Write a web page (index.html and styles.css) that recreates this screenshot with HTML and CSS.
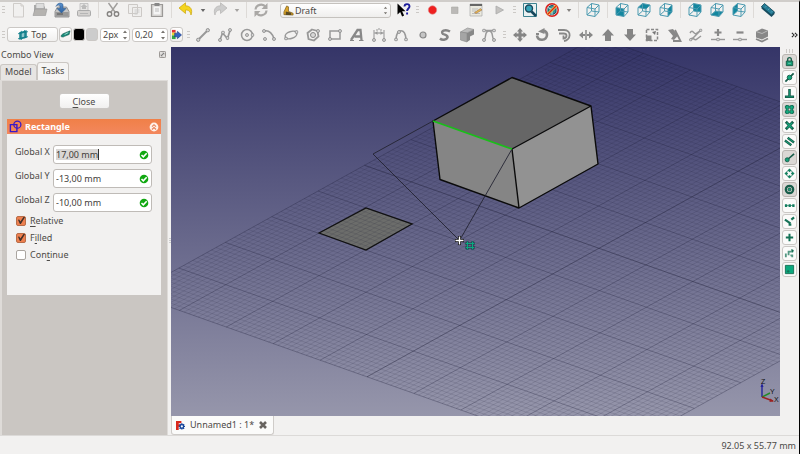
FILE: index.html
```html
<!DOCTYPE html>
<html lang="en">
<head>
<meta charset="utf-8">
<title>Unnamed1</title>
<link rel="stylesheet" href="styles.css">
</head>
<body>
<svg class="defs" aria-hidden="true">
  <defs>
    <linearGradient id="arrowFill" x1="0" y1="0" x2="0" y2="1"><stop offset="0" stop-color="#5c93cf"/><stop offset="1" stop-color="#2a5f9f"/></linearGradient>
    <symbol id="cube" viewBox="0 0 16 16"><path d="M2 5.500 6.500 1.500 14 3v7L10 14.500 2 13zM2 5.500 10 7l4-4M10 7v7.500M6.500 1.500V9L2 13M6.500 9l7.500 1" fill="none" stroke="#4d9bb1" stroke-width="1" stroke-linejoin="round"/></symbol>
    <symbol id="node" viewBox="0 0 4 4"><circle cx="2" cy="2" r="1.500" fill="#d4d4d4" stroke="#888" stroke-width=".8"/></symbol>
    <symbol id="down" viewBox="0 0 8 6"><path d="M1 1h6L4 5z"/></symbol>
    <symbol id="spin" viewBox="0 0 6 12"><path d="M1 4 3 1.500 5 4zM1 8l2 2.500L5 8z" fill="#77736e"/></symbol>
    <symbol id="ok" viewBox="0 0 10 10"><circle cx="5" cy="5" r="4.300" fill="#12a812"/><path d="m2.500 5 1.800 1.800 3.400-3.600" fill="none" stroke="#fff" stroke-width="1.600"/></symbol>
  </defs>
</svg>

<header class="toolbars">
  <div class="bar" role="toolbar" aria-label="File and view">
    <span class="grip"></span>
    <button class="tool" aria-label="New"><svg viewBox="0 0 16 16"><path d="M3.500 1.500H11l2.500 2.500v11h-10z" fill="#f1f0ef" stroke="#cfccc9"/><path d="M11 1.500V4h2.500" fill="none" stroke="#cfccc9"/></svg></button>
    <button class="tool" aria-label="Open"><svg viewBox="0 0 16 16"><path d="M2 3h4l1 1.500h6V13H2z" fill="#aaa"/><path d="M4 1.500h8v5H4z" fill="#ddd" stroke="#aaa" stroke-width=".6"/><path d="M1 13.500 3 7h12l-1.500 6.500z" fill="#b5b3b0" stroke="#999" stroke-width=".6"/></svg></button>
    <button class="tool" aria-label="Save"><svg viewBox="0 0 16 16"><path d="M1 9.500 3.500 5h9L15 9.500V15H1z" fill="#c5c5c5" stroke="#808080" stroke-width=".8"/><path d="M1.500 10h13v4.500h-13z" fill="#999"/><path d="M3 12h6" stroke="#555"/><path d="M2 4.500C3 1 7 0 9 2.500v4h3l-4.500 4.500L3 6.500h3V4C5 2.500 3 3 2 4.500z" fill="url(#arrowFill)" stroke="#345f91" stroke-width=".6"/></svg></button>
    <button class="tool" aria-label="Print"><svg viewBox="0 0 16 16"><path d="M4 1.500h8V9H4z" fill="#e6e5e4" stroke="#bbb" stroke-width=".8"/><path d="M6 7V5H4.500L8 2l3.500 3H10v2z" fill="#bbb"/><rect x="1.500" y="8.500" width="13" height="5.500" rx="1" fill="#d4d2d0" stroke="#aaa"/><path d="M4 11.500h8" stroke="#b5b5b5"/></svg></button>
    <span class="sep"></span>
    <button class="tool" aria-label="Cut"><svg viewBox="0 0 16 16"><path d="M3.500 1 10 10M12.500 1 6 10" stroke="#a09e9c" stroke-width="1.400"/><circle cx="4.500" cy="12" r="2.200" fill="none" stroke="#858381" stroke-width="1.400"/><circle cx="11.500" cy="12" r="2.200" fill="none" stroke="#858381" stroke-width="1.400"/></svg></button>
    <button class="tool" aria-label="Copy"><svg viewBox="0 0 16 16"><path d="M1.500 2.500h9v9h-9zM5.500 5.500h9v9h-9z" fill="#efeeed" stroke="#ccc9c6"/><path d="M7.500 8h5M7.500 10h5M7.500 12h3" stroke="#ccc"/></svg></button>
    <button class="tool" aria-label="Paste"><svg viewBox="0 0 16 16"><path d="M2.500 2.500h11v12h-11z" fill="#d5d3d1" stroke="#9b9997" stroke-width="1.200"/><path d="M4.500 4.500h7v8h-7z" fill="#f5f5f5"/><path d="M5.500 1h5v3h-5z" fill="#888"/><path d="M6 7h4M6 9h4" stroke="#bbb"/></svg></button>
    <span class="sep"></span>
    <button class="tool" aria-label="Undo"><svg viewBox="0 0 16 16"><path d="M1 6 7.500.8v3c5 0 7.500 4 5.500 9.200-.8-4-2.500-5-5.500-5v3.500z" fill="#f4d51e" stroke="#caa40a" stroke-width=".7"/></svg></button>
    <button class="drop" aria-label="Undo history"><svg fill="#666"><use href="#down"/></svg></button>
    <button class="tool" aria-label="Redo"><svg viewBox="0 0 16 16"><path d="M15 6 8.500.8v3c-5 0-7.500 4-5.500 9.200.8-4 2.500-5 5.500-5v3.500z" fill="#ccc" stroke="#b5b3b1" stroke-width=".7"/></svg></button>
    <button class="drop" aria-label="Redo history"><svg fill="#a5a3a1"><use href="#down"/></svg></button>
    <span class="sep"></span>
    <button class="tool" aria-label="Refresh"><svg viewBox="0 0 16 16"><path d="M2.500 7.500c.5-5 7.500-6.500 10-2.500M13.500 8.500c-.5 5-7.500 6.500-10 2.500" fill="none" stroke="#aaa8a6" stroke-width="2.200"/><path d="M14.500 1v6h-6zM1.500 15V9h6z" fill="#aaa8a6"/></svg></button>
    <span class="combo">
      <svg class="combo-icon" viewBox="0 0 12 12"><path d="M1 10.500V7.500L4 1l2 1v5l5 2v2z" fill="#dda52a" stroke="#6f5312" stroke-width=".7"/><path d="m3 7 6 1.500V11H3z" fill="#5b4b22"/></svg>
      <select aria-label="Workbench"><option>Draft</option></select>
      <svg class="combo-spin"><use href="#spin"/></svg>
    </span>
    <button class="tool" aria-label="What's this?"><svg viewBox="0 0 16 16"><path d="M2.500 1.500v11l2.700-2.500 1.900 4.500 2-.9-2-4.300h3.400z" fill="#000"/><path d="M9.500 4.500c0-3.200 5-3.200 5 0 0 2-2.400 2-2.400 4.500M12.100 10.500v2" fill="none" stroke="#1d1d9b" stroke-width="1.900"/></svg></button>
    <span class="grip"></span>
    <button class="tool" aria-label="Record macro"><svg viewBox="0 0 16 16"><circle cx="8.500" cy="8" r="4.200" fill="#ee2020" stroke="#d88" stroke-width=".6"/></svg></button>
    <button class="tool" aria-label="Stop macro"><svg viewBox="0 0 16 16"><path d="M5.500 5H12v6.500H5.500z" fill="#bbb9b7" stroke="#a9a7a5" stroke-width=".6"/></svg></button>
    <button class="tool" aria-label="Macros"><svg viewBox="0 0 16 16"><path d="M2 2h12v12H2z" fill="#eae9df" stroke="#aaa" stroke-width=".7"/><path d="M2 2h12v2H2z" fill="#666"/><path d="M4 7h6M4 9h4M4 11.500h8" stroke="#bbb"/><path d="m6.500 10.500 6-4 1.500 1.500-6 3.500z" fill="#e8b64c" stroke="#865" stroke-width=".5"/></svg></button>
    <button class="tool" aria-label="Run macro"><svg viewBox="0 0 16 16"><path d="m6 4 7.500 4L6 12z" fill="#c4c2c0" stroke="#aaa" stroke-width=".8"/></svg></button>
    <span class="grip broad"></span>
    <button class="tool" aria-label="Fit all"><svg viewBox="0 0 16 16"><path d="M1.500 1.500h13v13h-13z" fill="#e9f1f2" stroke="#3c8290"/><circle cx="7" cy="6.500" r="3.500" fill="#36a5ba" stroke="#17475c" stroke-width="1.400"/><path d="m9.500 9.500 4.500 4.500" stroke="#17475c" stroke-width="2.600"/></svg></button>
    <button class="tool" aria-label="Draw style"><svg viewBox="0 0 16 16"><path d="M4 5.500 8 3l4 2.500v5L8 13l-4-2.500z" fill="#39909c" stroke="#174d59"/><path d="m4 5.500 4 2 4-2M8 7.500V13" fill="none" stroke="#bde1e5"/><circle cx="8" cy="8" r="6.200" fill="none" stroke="#d9201d" stroke-width="1.500"/><path d="m3.500 12.500 9-9" stroke="#f8dc40" stroke-width="2.600"/><path d="m3.500 12.500 9-9" stroke="#d9201d" stroke-width="1.400"/></svg></button>
    <button class="drop" aria-label="Draw style options"><svg fill="#85827f"><use href="#down"/></svg></button>
    <span class="sep"></span>
    <button class="tool" aria-label="Axonometric"><svg><use href="#cube"/></svg></button>
    <span class="sep"></span>
    <button class="tool" aria-label="Front"><svg viewBox="0 0 16 16"><path d="m2 5.500 8 1.500v7.500L2 13z" fill="#13879f"/><use href="#cube" width="16" height="16"/></svg></button>
    <button class="tool" aria-label="Top view"><svg viewBox="0 0 16 16"><path d="M2 5.500 6.500 1.500 14 3l-4 4z" fill="#13879f"/><use href="#cube" width="16" height="16"/></svg></button>
    <button class="tool" aria-label="Right"><svg viewBox="0 0 16 16"><path d="m10 7 4-4v7l-4 4.500z" fill="#13879f"/><use href="#cube" width="16" height="16"/></svg></button>
    <span class="sep"></span>
    <button class="tool" aria-label="Rear"><svg viewBox="0 0 16 16"><path d="M6.500 1.500 14 3v7L6.500 9z" fill="#13879f"/><use href="#cube" width="16" height="16"/></svg></button>
    <button class="tool" aria-label="Bottom"><svg viewBox="0 0 16 16"><path d="M6.500 9 14 10l-4 4.500L2 13z" fill="#13879f"/><use href="#cube" width="16" height="16"/></svg></button>
    <button class="tool" aria-label="Left"><svg viewBox="0 0 16 16"><path d="M2 5.500 6.500 1.500V9L2 13z" fill="#13879f"/><use href="#cube" width="16" height="16"/></svg></button>
    <span class="sep"></span>
    <button class="tool" aria-label="Measure"><svg viewBox="0 0 16 16"><path d="m1.500 4.500 3-3 10 8.500v2l-3 3-10-8.500z" fill="#194e62"/><path d="m1.500 4.500 3-3 10 8.500-3 3z" fill="#247c96" stroke="#163c4a" stroke-width=".6"/><path d="m5 5.500 1.500-1.500M8 8l1.500-1.500M11 10.500l1.500-1.500" stroke="#6fb3c4" stroke-width=".7"/></svg></button>
  </div>

  <div class="bar" role="toolbar" aria-label="Draft tools">
    <span class="grip"></span>
    <button class="plane"><svg viewBox="0 0 12 12"><path d="m2.500 3.500 7-2v7l-7 2z" fill="#8fc7cd" stroke="#14808c" stroke-width="2"/><path d="M0 4.500 12 2M0 10.500 12 8M4 1v11M8 0v10" stroke="#14808c"/></svg>Top</button>
    <button class="mini" aria-label="Construction mode"><svg viewBox="0 0 12 12"><path d="M1 8c1-3 3-3 5-4l5-2-1 4-5 2c-1 1-3 1-4 0z" fill="#178978" stroke="#0d5549" stroke-width=".6"/><path d="m5 6 4-2" stroke="#a5ddd2"/></svg></button>
    <button class="swatch black" aria-label="Line color"></button>
    <button class="swatch gray" aria-label="Face color"></button>
    <span class="spinbox"><input class="width-field" aria-label="Line width" value="2px"><svg><use href="#spin"/></svg></span>
    <span class="spinbox"><input class="size-field" aria-label="Text size" value="0,20"><svg><use href="#spin"/></svg></span>
    <button class="mini apply" aria-label="Apply style"><svg viewBox="0 0 12 12"><path d="M1 1h4v3H1z" fill="#e03535"/><path d="M1 4h4v3H1z" fill="#eed232"/><path d="M1 7h4v4H1z" fill="#35a445"/><path d="M4 4.500h3V2.500l4.500 4-4.500 4V8.500H4z" fill="#3262c1" stroke="#173377" stroke-width=".6"/></svg></button>
    <span class="grip"></span>
    <button class="tool" aria-label="Line"><svg viewBox="0 0 16 16"><path d="M3.500 12.500 12.500 3.500" stroke="#999" stroke-width="2"/><use href="#node" x="1" y="10.500" width="4.500" height="4.500"/><use href="#node" x="10.500" y="1" width="4.500" height="4.500"/></svg></button>
    <button class="tool" aria-label="Wire"><svg viewBox="0 0 16 16"><path d="m3 13 2.500-7 5 5.500L13 3.500" fill="none" stroke="#999" stroke-width="1.700"/><use href="#node" x="1" y="11" width="4" height="4"/><use href="#node" x="4" y="3.500" width="4" height="4"/><use href="#node" x="8.500" y="9" width="4" height="4"/><use href="#node" x="11" y="1" width="4" height="4"/></svg></button>
    <button class="tool" aria-label="Circle"><svg viewBox="0 0 16 16"><circle cx="8" cy="8" r="5.500" fill="none" stroke="#999" stroke-width="1.500"/><use href="#node" x="6" y="6" width="4" height="4"/><use href="#node" x="11.500" y="6" width="4" height="4"/></svg></button>
    <button class="tool" aria-label="Arc"><svg viewBox="0 0 16 16"><path d="M3 4c5-1.500 9 3 10 8" fill="none" stroke="#999" stroke-width="1.600"/><use href="#node" x="1" y="2" width="4" height="4"/><use href="#node" x="11" y="10" width="4" height="4"/><use href="#node" x="2" y="10" width="4" height="4"/></svg></button>
    <button class="tool" aria-label="Ellipse"><svg viewBox="0 0 16 16"><ellipse cx="8" cy="8" rx="6" ry="3.500" transform="rotate(-18 8 8)" fill="none" stroke="#999" stroke-width="1.500"/><use href="#node" x="1" y="9.500" width="4" height="4"/><use href="#node" x="11.500" y="3" width="4" height="4"/></svg></button>
    <button class="tool" aria-label="Polygon"><svg viewBox="0 0 16 16"><path d="m7 2.500 5.500 1.500 1 5.500L9 13.500 3.500 12 2.500 6z" fill="none" stroke="#999" stroke-width="1.800"/><circle cx="8" cy="8" r="2.500" fill="#d8d8d8" stroke="#888"/><use href="#node" x="11" y="2" width="4" height="4"/></svg></button>
    <button class="tool" aria-label="Rectangle"><svg viewBox="0 0 16 16"><path d="M3 4h10v8H3z" fill="none" stroke="#999" stroke-width="1.500"/><use href="#node" x="1" y="10" width="4" height="4"/><use href="#node" x="11" y="2" width="4" height="4"/></svg></button>
    <button class="tool" aria-label="Text"><svg viewBox="0 0 16 16"><path d="M2 13 8.500 3h3l1 10M5.500 9.500H12" fill="none" stroke="#888" stroke-width="2.300"/><path d="M1 13.500h4M10 13.500h4.500" stroke="#888" stroke-width="1.200"/></svg></button>
    <button class="tool" aria-label="Dimension"><svg viewBox="0 0 16 16"><path d="M3 3v10M13 3v10M3 6h10" stroke="#aaa" stroke-width="1.300"/><path d="m4 6 2.500-2v4zM12 6 9.500 4v4z" fill="#999"/><path d="M6 2v2M8 1v2M10 2v2" stroke="#999"/><use href="#node" x="1" y="11" width="4" height="4"/><use href="#node" x="11" y="11" width="4" height="4"/></svg></button>
    <button class="tool" aria-label="B-spline"><svg viewBox="0 0 16 16"><path d="M3 12C4 1 12 1 13 12" fill="none" stroke="#999" stroke-width="1.700"/><use href="#node" x="1" y="10.500" width="4" height="4"/><use href="#node" x="4" y="3" width="4" height="4"/><use href="#node" x="11" y="10.500" width="4" height="4"/></svg></button>
    <button class="tool" aria-label="Point"><svg viewBox="0 0 16 16"><circle cx="8" cy="8" r="3" fill="#c5c5c5" stroke="#888" stroke-width="1.200"/></svg></button>
    <button class="tool" aria-label="Shape string"><svg viewBox="0 0 16 16"><path d="M13 4.500C8 1.500 3 4.500 6 7c2 1 5 .8 4.500 3.500C9.500 13 5 13.500 3 11.500" fill="none" stroke="#858585" stroke-width="2.500"/></svg></button>
    <button class="tool" aria-label="Facebinder"><svg viewBox="0 0 16 16"><path d="m1.500 5 7-4L15 2.500 8 6z" fill="#bbb" stroke="#888" stroke-width=".6"/><path d="M1.500 5 8 6v9l-6.500-2z" fill="#a5a5a5" stroke="#888" stroke-width=".6"/><path d="m8 6 7-3.500v5l-4 2v3.500L8 15z" fill="#888"/></svg></button>
    <button class="tool" aria-label="Bezier curve"><svg viewBox="0 0 16 16"><path d="M3 13C6 10 3 4 8 4s2 6 5 9M3 3.500h10" fill="none" stroke="#999" stroke-width="1.500"/><use href="#node" x="1" y="11" width="4" height="4"/><use href="#node" x="11" y="11" width="4" height="4"/><use href="#node" x="1" y="1.500" width="4" height="4"/><use href="#node" x="11" y="1.500" width="4" height="4"/></svg></button>
    <span class="grip wide"></span>
    <button class="tool" aria-label="Move"><svg viewBox="0 0 16 16"><path d="M8 1 11 4.500H9.500v2h2V5L15 8l-3.500 3V9.500h-2v2H11L8 15l-3-3.500h1.500v-2h-2V11L1 8l3.500-3v1.500h2v-2H5z" fill="#858585"/></svg></button>
    <button class="tool" aria-label="Rotate"><svg viewBox="0 0 16 16"><path d="M3 8.500c1 6 9.500 5.500 10-.5.200-2-1-3.500-3-4.500" fill="none" stroke="#888" stroke-width="2.600"/><path d="M4 4.500 10.500 1v6z" fill="#888"/><path d="M2 7h3" stroke="#888" stroke-width="2"/></svg></button>
    <button class="tool" aria-label="Offset"><svg viewBox="0 0 16 16"><path d="M2 3h6c8 0 7 10 0 11M3 6.500h4.500c4 0 4 4.500 0 5V8.500" fill="none" stroke="#888" stroke-width="1.800"/></svg></button>
    <button class="tool" aria-label="Trimex"><svg viewBox="0 0 16 16"><path d="m1 8 4-3.500V7h2v2H5v2.500zM15 8l-4-3.500V7H9v2h2v2.500z" fill="#888"/><path d="M8 3v10" stroke="#888" stroke-width="1.500"/></svg></button>
    <button class="tool" aria-label="Upgrade"><svg viewBox="0 0 16 16"><path d="m8 2 6 6.500h-3V14H5V8.500H2z" fill="#858585"/></svg></button>
    <button class="tool" aria-label="Downgrade"><svg viewBox="0 0 16 16"><path d="m8 14 6-6.500h-3V2H5v5.500H2z" fill="#858585"/></svg></button>
    <button class="tool" aria-label="Scale"><svg viewBox="0 0 16 16"><path d="M2.500 2.500h11v11h-11z" fill="none" stroke="#888" stroke-width="1.500" stroke-dasharray="3 1.500"/><path d="M2 8.500h5.500V14H2z" fill="#888"/><path d="m12 4-1 4-3-3z" fill="#777"/></svg></button>
    <button class="tool" aria-label="Edit"><svg viewBox="0 0 16 16"><path d="m2 3 5-1 5 6.500-4 4.500-3-1 2-3z" fill="#888"/><path d="m9 3 4 8 1.500 3H7" fill="none" stroke="#888" stroke-width="1.800"/></svg></button>
    <button class="tool" aria-label="Wire to B-spline"><svg viewBox="0 0 16 16"><path d="M2 6c3-5 4 3 7 0l4-3M2 13c3-5 4 2 7-1l4-3M3 13 13 3" fill="none" stroke="#999" stroke-width="1.500"/><use href="#node" x="11" y="1.500" width="3.500" height="3.500"/><use href="#node" x="1" y="11" width="3.500" height="3.500"/></svg></button>
    <button class="tool" aria-label="Add point"><svg viewBox="0 0 16 16"><path d="M8 2v7M4.500 5.500h7" stroke="#888" stroke-width="2.200"/><path d="M1 12.500h14" stroke="#999" stroke-width="1.400"/><use href="#node" x="6" y="10.500" width="4" height="4"/></svg></button>
    <button class="tool" aria-label="Delete point"><svg viewBox="0 0 16 16"><path d="M4.500 5.500h7" stroke="#888" stroke-width="2.200"/><path d="M1 12.500h14" stroke="#999" stroke-width="1.400"/><use href="#node" x="6" y="10.500" width="4" height="4"/></svg></button>
    <button class="tool" aria-label="Shape to 2D view"><svg viewBox="0 0 16 16"><path d="m2 4.500 6-3 6 2v6l-6 3-6-2z" fill="#888"/><path d="m2 4.500 6 2 6-3" fill="none" stroke="#bbb"/><path d="m2 12 6 2.500 6-3" fill="none" stroke="#888" stroke-width="1.800"/></svg></button>
    <button class="more" aria-label="More tools"><svg viewBox="0 0 8 6"><path d="m1 .5 2.500 2.500L1 5.500M4.500.5 7 3 4.500 5.500" fill="none" stroke="#222" stroke-width="1.200"/></svg></button>
  </div>
</header>

<main class="workspace">
  <aside class="combo-view">
    <div class="dock-title"><span>Combo View</span><button aria-label="Float panel"><svg viewBox="0 0 8 8"><rect x=".5" y=".5" width="7" height="7" rx="1" fill="#e2e0de" stroke="#8b8783"/><path d="M2.500 5.500V4M2.500 5.500H4M2.500 5.500l3-3M4 2.500h1.500V4" fill="none" stroke="#777"/></svg></button></div>
    <div class="tabs" role="tablist">
      <button class="tab" role="tab" aria-selected="false">Model</button>
      <button class="tab active" role="tab" aria-selected="true">Tasks</button>
    </div>
    <div class="tasks">
      <button class="close-task"><u>C</u>lose</button>
      <section class="task-box">
        <h2>
          <svg viewBox="0 0 14 14"><path d="M1.500 5h7v7.500h-7z" fill="none" stroke="#3a18c8" stroke-width="1.500"/><circle cx="9" cy="5" r="3.800" fill="none" stroke="#3a18c8" stroke-width="1.400"/></svg>
          <span>Rectangle</span>
          <button aria-label="Collapse"><svg viewBox="0 0 10 10"><circle cx="5" cy="5" r="4.400" fill="#fff0e8"/><path d="m3 4.700 2-2 2 2M3 7.500l2-2 2 2" fill="none" stroke="#e98055" stroke-width="1.100"/></svg></button>
        </h2>
        <form class="fields">
          <label for="gx">Global X</label><span class="field"><input id="gx" class="selected" value="17,00 mm"><svg><use href="#ok"/></svg></span>
          <label for="gy">Global Y</label><span class="field"><input id="gy" value="-13,00 mm"><svg><use href="#ok"/></svg></span>
          <label for="gz">Global Z</label><span class="field"><input id="gz" value="-10,00 mm"><svg><use href="#ok"/></svg></span>
        </form>
        <div class="options">
          <label><input type="checkbox" checked><span><u>R</u>elative</span></label>
          <label><input type="checkbox" checked><span>F<u>i</u>lled</span></label>
          <label><input type="checkbox"><span>Con<u>t</u>inue</span></label>
        </div>
      </section>
    </div>
  </aside>
  <div class="splitter"></div>
  <section class="document">
    <svg class="scene" viewBox="171 47 609 369" preserveAspectRatio="xMidYMid slice" role="img" aria-label="3D view">
      <defs><linearGradient id="sky" x1="0" y1="0" x2="0" y2="1"><stop offset="0" stop-color="#353568"/><stop offset="1" stop-color="#9696ab"/></linearGradient></defs>
      <rect x="171" y="47" width="609" height="369" fill="url(#sky)"/>
      <path d="m319 233 47-25 46 16-46 26z" fill="#6c6d6b"/>
      <g id="grid" class="grid"></g>
      <path d="m319 233 47-25 46 16-46 26z" fill="none" stroke="#111" stroke-width="1.300"/>
      <path d="m433 121 79-43 79 28-79 43z" fill="#666"/>
      <path d="m433 121 79 28 7 59-79-28.500z" fill="#858585"/>
      <path d="m512 149 79-43 7 58-79 44z" fill="#929292"/>
      <path d="m433 121 79-43.500 79 28.500 7 58-79 44-79-28.500zM512 149l79-43M512 149l7 59" fill="none" stroke="#0b0b0b" stroke-width="1.400" stroke-linejoin="round"/>
      <path d="m433 121-60 33 86.500 86.500L512 149" fill="none" stroke="#242432" stroke-width=".9"/>
      <path d="m433 121 79 28" stroke="#18c018" stroke-width="1.600"/>
      <path d="M459.500 236v9M455 240.500h9" stroke="#111" stroke-width="3"/>
      <path d="M459.500 236.500v8M455.500 240.500h8" stroke="#fff" stroke-width="1.400"/>
      <path d="M467.500 241v9M472.500 241v9M465 243.500h10M465 247.500h10" stroke="#193b46" stroke-width="1.800"/>
      <path d="M467.500 241.500v8M472.500 241.500v8M465.500 243.500h9M465.500 247.500h9" stroke="#0aa980" stroke-width="1"/>
      <g fill="none" stroke-width="1.400"><path d="M762 397v-12" stroke="#24249b"/><path d="m762 397 8-4" stroke="#238a28"/><path d="m762 397 11 4" stroke="#9b2020"/></g>
      <path d="m760.500 387 1.500-4 1.500 4z" fill="#24249b"/><path d="m770 398.500 4 2.700-4.500.8z" fill="#9b2020"/>
      <g class="axis-label"><text x="761" y="384">Z</text><text x="770" y="394">Y</text><text x="774" y="402">X</text></g>
    </svg>
    <div class="doc-tabs">
      <div class="doc-tab">
        <svg viewBox="0 0 10 10"><path d="M0 0h6v2.500H3V4h2v2H3v4H0z" fill="#d9281c"/><path d="M6.500 2.500v7M3 6h7M4 3.500l5 5M9 3.500l-5 5" stroke="#17469c" stroke-width="1.500"/><circle cx="6.500" cy="6" r="2.600" fill="#17469c"/><circle cx="6.500" cy="6" r="1.200" fill="#fff"/></svg>
        <span>Unnamed1 : 1*</span>
        <button aria-label="Close document"><svg viewBox="0 0 8 8"><path d="m1 1 6 6M7 1 1 7" stroke="#686460" stroke-width="2.600"/></svg></button>
      </div>
    </div>
  </section>
  <nav class="snaps" aria-label="Snapping">
    <span class="grip-row"></span>
    <button class="on" aria-label="Lock"><svg viewBox="0 0 12 12"><path d="M4 6V4c0-3 4-3 4 0v2" fill="none" stroke="#1b5f4b" stroke-width="1.500"/><path d="M2.500 5.500h7v5h-7z" fill="#149b74" stroke="#165944"/><path d="M4.500 8h3" stroke="#74cdb3"/></svg></button>
    <button aria-label="Midpoint"><svg viewBox="0 0 12 12"><path d="m1.500 10.500 9-9" stroke="#185d4a" stroke-width="2"/><circle cx="6" cy="6" r="2.500" fill="#13a67c" stroke="#185d4a"/></svg></button>
    <button aria-label="Perpendicular"><svg viewBox="0 0 12 12"><path d="M6 1v8M1 9.500h10" stroke="#185d4a" stroke-width="2.800"/><path d="M6 2v7M2 9.500h8" stroke="#13906e"/></svg></button>
    <button class="on" aria-label="Grid"><svg viewBox="0 0 12 12"><path d="M3.500 1v10M8.500 1v10M1 3.500h10M1 8.500h10" stroke="#185d4a" stroke-width="3"/><path d="M3.500 1.500v9M8.500 1.500v9M1.500 3.500h9M1.500 8.500h9" stroke="#16af82" stroke-width="1.400"/></svg></button>
    <button aria-label="Intersection"><svg viewBox="0 0 12 12"><path d="m2 2 8 8M10 2l-8 8" stroke="#185d4a" stroke-width="3"/><path d="m3 3 6 6M9 3 3 9" stroke="#15a77d" stroke-width="1.200"/></svg></button>
    <button aria-label="Parallel"><svg viewBox="0 0 12 12"><path d="m4 2 7 5M1 5l7 5" stroke="#185d4a" stroke-width="2.600"/><path d="m4.500 2.400 6 4.200M1.500 5.400l6 4.200" stroke="#15a77d"/></svg></button>
    <button class="on" aria-label="Endpoint"><svg viewBox="0 0 12 12"><path d="m3 9 8-7" stroke="#185d4a" stroke-width="1.800"/><circle cx="3.500" cy="8.500" r="2.200" fill="#14a078" stroke="#185d4a"/></svg></button>
    <button aria-label="Angle"><svg viewBox="0 0 12 12"><circle cx="6" cy="6" r="3.500" fill="none" stroke="#4c8b79"/><path d="M6 .5 8 2.500 6 4.500 4 2.500zM6 7.500l2 2-2 2-2-2zM2.500 4l2 2-2 2-2-2zM9.500 4l2 2-2 2-2-2z" fill="#12815f"/></svg></button>
    <button class="on" aria-label="Center"><svg viewBox="0 0 12 12"><circle cx="6" cy="6" r="4" fill="none" stroke="#185d4a" stroke-width="2.500"/><circle cx="6" cy="6" r="1.600" fill="#14a078" stroke="#185d4a"/></svg></button>
    <button aria-label="Extension"><svg viewBox="0 0 12 12"><path d="M1 6h10" stroke="#5c9989"/><path d="M1 4.500h2.500v3H1zM5 4.500h2.500v3H5zM9 4.500h2.500v3H9z" fill="#137e5f"/></svg></button>
    <button aria-label="Near"><svg viewBox="0 0 12 12"><path d="m1 4 6 4M8 4l3-2.500M5 9.500h3" stroke="#167257" stroke-width="2.400"/></svg></button>
    <button aria-label="Ortho"><svg viewBox="0 0 12 12"><path d="M6 2v8M2 6h8" stroke="#167257" stroke-width="2.200"/></svg></button>
    <button aria-label="Special"><svg viewBox="0 0 12 12"><path d="M2 10V6M5 8V4h4V1.500M7 8h2v2" fill="none" stroke="#559983" stroke-width="2"/><path d="m8 1 3 2-2 2" fill="#176f55"/></svg></button>
    <button aria-label="Working plane"><svg viewBox="0 0 12 12"><path d="M1.500 1.500h9v9h-9z" fill="#0ca97e" stroke="#176f55"/><path d="M3 8h3M4.500 6.500v3" stroke="#176f55"/></svg></button>
  </nav>
</main>

<footer class="status">92.05 x 55.77 mm</footer>
<script src="grid.js"></script>
</body>
</html>
```
FILE: styles.css
```css
* { box-sizing: border-box; }
body {
  margin: 0;
  min-height: 100vh;
  display: flex;
  flex-direction: column;
  background: #f2f1f0;
  color: #4c4a47;
  border-top: 2px solid #d0cdca;
  border-right: 1px solid #000;
  font: 9px/14px "Noto Sans", "Open Sans", sans-serif;
}
button, input, select { font: inherit; color: inherit; margin: 0; padding: 0; }
button { border: 0; background: none; display: grid; place-items: center; }
svg { display: block; }
u { text-underline-offset: 2px; }
.defs { position: absolute; width: 0; height: 0; }

.toolbars { flex: none; padding-bottom: 3px; }
.bar { display: flex; align-items: center; height: 16px; }
.bar + .bar { margin-top: 7px; height: 19px; }
.tool { flex: 0 0 22px; height: 16px; }
.tool svg { width: 16px; height: 16px; }
.grip { flex: 0 0 7px; height: 8px; border: 0 solid transparent; border-width: 0 2px; background: repeating-linear-gradient(#ccc9c6 0 1px, transparent 1px 3px) padding-box; }
.grip.wide { flex-basis: 9px; border-width: 0 3px; }
.grip.broad { flex-basis: 10px; border-width: 0 3px 0 4px; }
.sep { flex: 0 0 7px; height: 16px; background: linear-gradient(#dddad7, #dddad7) center / 1px 100% no-repeat; }
.drop { flex: 0 0 12px; }
.drop svg { width: 6px; height: 5px; }
.combo { position: relative; margin: 0 1px 0 8px; flex: 0 0 111px; }
.combo select { appearance: none; display: block; width: 100%; height: 15px; padding: 0 14px; border: 1px solid #c5c2be; border-radius: 3px; background: linear-gradient(#fff, #efeeed); line-height: 13px; }
.combo-icon { position: absolute; left: 3px; top: 2px; width: 11px; height: 11px; pointer-events: none; }
.combo-spin { position: absolute; right: 3px; top: 2px; width: 5px; height: 11px; pointer-events: none; }

.plane, .mini, .swatch, .close-task { border: 1px solid #cbc8c5; border-radius: 3px; background: linear-gradient(#fff, #f1f0ef); }
.plane { display: flex; align-items: center; justify-content: center; gap: 3px; width: 51px; height: 15px; line-height: 13px; }
.plane svg { width: 10px; height: 10px; }
.mini { width: 13px; height: 15px; margin-left: 1px; }
.mini svg { width: 11px; height: 11px; }
.swatch { width: 12px; height: 13px; margin-left: 1px; }
.swatch.black { background: #000; }
.swatch.gray { background: #ccc; }
.spinbox { position: relative; margin-left: 2px; }
.spinbox input { display: block; height: 14px; padding: 0 2px; border: 1px solid #cbc8c5; border-radius: 3px; background: #fff; line-height: 12px; }
.spinbox svg { position: absolute; right: 2px; top: 1px; width: 6px; height: 12px; }
.width-field { width: 30px; }
.size-field { width: 36px; }
.apply { margin: 0 2px; }
.more { margin: 0 1px 0 auto; }
.more svg { width: 7px; height: 6px; }

.workspace { flex: 1; display: flex; }
.combo-view { flex: 0 0 168px; display: flex; flex-direction: column; }
.dock-title { display: flex; align-items: center; justify-content: space-between; height: 15px; padding: 0 2px 0 1px; }
.dock-title svg { width: 7px; height: 7px; }
.tabs { display: flex; align-items: flex-end; height: 18px; }
.tab { height: 16px; padding: 0 4px 1px; border: 1px solid #cbc7c3; border-bottom: 0; border-radius: 3px 3px 0 0; background: #e7e5e3; }
.tab.active { height: 18px; background: #f5f4f3; }
.tasks { flex: 1; padding: 12px 6px 12px 5px; border: 1px solid #dedbd8; border-width: 1px 1px 0 2px; background: #cac6c2; }
.close-task { display: block; width: 51px; height: 16px; margin: 0 auto 10px; line-height: 13px; }
.task-box { height: 176px; background: #f2f1f0; }
.task-box h2 { display: flex; align-items: center; gap: 3px; height: 15px; margin: 0; padding: 0 2px; background: linear-gradient(#f08048, #f3875d); color: #fff; font-size: 9px; line-height: 14px; }
.task-box h2 svg { width: 13px; height: 13px; }
.task-box h2 button { margin-left: auto; }
.task-box h2 button svg { width: 10px; height: 10px; }
.fields { display: grid; grid-template-columns: 38px 1fr; row-gap: 5px; padding: 11px 9px 0 8px; }
.fields label { white-space: nowrap; }
.field { position: relative; }
.field input { display: block; width: 100%; height: 19px; padding: 0 16px 0 2px; border: 1px solid #bfbbb7; border-radius: 3px; background: #fff; color: #3f3d3a; }
.field input.selected { background: linear-gradient(#333, #333) 44px center / 1px 11px no-repeat, linear-gradient(#d9d7d5, #d9d7d5) 2px center / 42px 11px no-repeat, #fff; }
.field svg { position: absolute; right: 3px; top: 5px; width: 10px; height: 10px; }
.options { padding: 0 9px; }
.options label { display: flex; align-items: center; gap: 4px; height: 17px; }
.options input { appearance: none; display: grid; width: 10px; height: 10px; border: 1px solid #aaa5a0; border-radius: 2px; background: #fff; }
.options input:checked { border-color: #b86d49; background: #ee804f; }
.options input:checked::before { content: ""; background: #413029; clip-path: polygon(12% 42%, 28% 36%, 42% 62%, 85% 0, 100% 8%, 48% 95%, 36% 95%); }
.splitter { flex: 0 0 3px; background: repeating-linear-gradient(#ccc 0 1px, transparent 1px 2px) center / 2px 6px no-repeat; }

.document { flex: 1; min-width: 0; display: flex; flex-direction: column; }
.scene { flex: 1 1 0; width: 100%; min-height: 0; }
.grid path { fill: none; vector-effect: non-scaling-stroke; stroke: #1c1c34; stroke-width: 1px; }
.grid .minor { stroke-opacity: .12; }
.grid .major { stroke-opacity: .3; }
.grid .axis { stroke-opacity: .16; }
.axis-label { font: 7px "Liberation Sans", sans-serif; fill: #111; }
.doc-tabs { height: 19px; display: flex; }
.doc-tab { display: flex; align-items: center; gap: 5px; padding: 0 6px 0 4px; border: 1px solid #cfccc9; border-top: 0; border-radius: 0 0 3px 3px; background: #fbfbfa; }
.doc-tab > svg { width: 9px; height: 9px; }
.doc-tab button svg { width: 8px; height: 8px; }

.snaps { flex: 0 0 19px; display: flex; flex-direction: column; align-items: center; gap: 1px; padding-top: 2px; }
.snaps button { width: 15px; height: 15px; border: 1px solid #cbc8c5; border-radius: 3px; background: #fbfbfa; }
.snaps button.on { background: #dbd8d5; border-color: #b9b5b1; }
.snaps svg { width: 11px; height: 11px; }
.grip-row { width: 7px; height: 4px; background: repeating-linear-gradient(90deg, #ccc9c6 0 1px, transparent 1px 3px); }

.status { height: 19px; padding: 3px 3px 0; border-top: 1px solid #dcdad8; text-align: right; }
```
FILE: grid.js
```js
// Draws the working-plane grid: ten major squares each way, ten steps per square.
const grid = document.getElementById('grid');
const project = 'matrix(4.69 1.66 4.64 -2.57 599 248.3)';
const paths = { minor: '', major: '', axis: '' };
for (let i = -50; i <= 50; i++) {
  const kind = i % 10 ? 'minor' : 'major';
  const d = `M${i} -50V50M-50 ${i}H50`;
  paths[kind] += d;
  if (i === 0) paths.axis += d;
}
for (const [kind, d] of Object.entries(paths)) {
  const path = document.createElementNS('http://www.w3.org/2000/svg', 'path');
  path.setAttribute('class', kind);
  path.setAttribute('transform', project);
  path.setAttribute('d', d);
  grid.append(path);
}
```
